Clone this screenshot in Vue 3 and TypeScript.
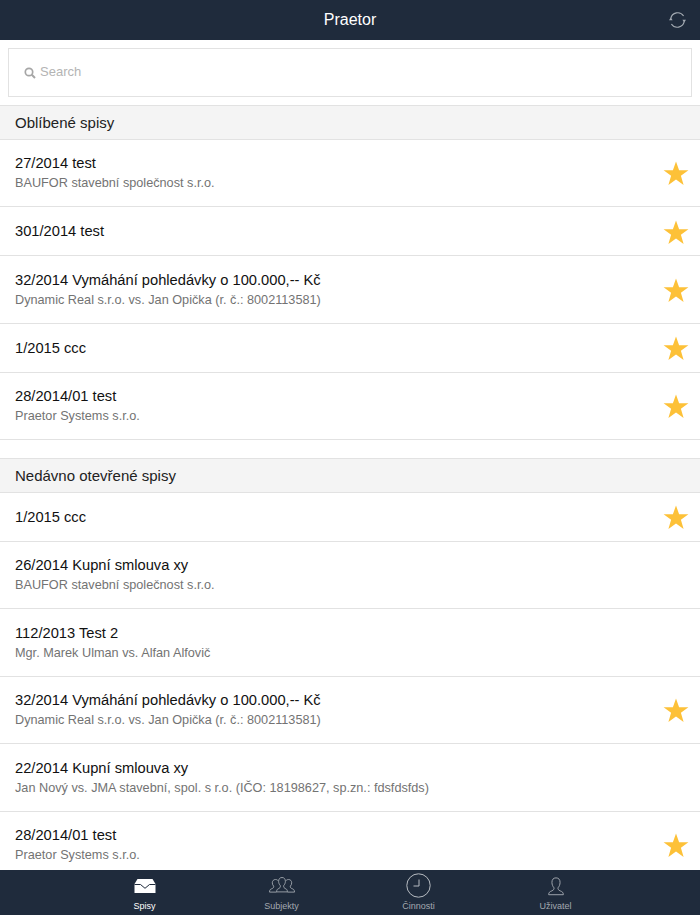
<script setup lang="ts">
interface Row { title: string; sub?: string; star: boolean }
const favourites: Row[] = [
  { title: '27/2014 test', sub: 'BAUFOR stavební společnost s.r.o.', star: true },
  { title: '301/2014 test', star: true },
  { title: '32/2014 Vymáhání pohledávky o 100.000,-- Kč', sub: 'Dynamic Real s.r.o. vs. Jan Opička (r. č.: 8002113581)', star: true },
  { title: '1/2015 ccc', star: true },
  { title: '28/2014/01 test', sub: 'Praetor Systems s.r.o.', star: true },
]
const recent: Row[] = [
  { title: '1/2015 ccc', star: true },
  { title: '26/2014 Kupní smlouva xy', sub: 'BAUFOR stavební společnost s.r.o.', star: false },
  { title: '112/2013 Test 2', sub: 'Mgr. Marek Ulman vs. Alfan Alfovič', star: false },
  { title: '32/2014 Vymáhání pohledávky o 100.000,-- Kč', sub: 'Dynamic Real s.r.o. vs. Jan Opička (r. č.: 8002113581)', star: true },
  { title: '22/2014 Kupní smlouva xy', sub: 'Jan Nový vs. JMA stavební, spol. s r.o. (IČO: 18198627, sp.zn.: fdsfdsfds)', star: false },
  { title: '28/2014/01 test', sub: 'Praetor Systems s.r.o.', star: true },
]
const sections = [
  { name: 'Oblíbené spisy', rows: favourites },
  { name: 'Nedávno otevřené spisy', rows: recent },
]
</script>

<template>
  <div class="app">
    <header class="topbar">
      <span class="topbar-title">Praetor</span>
      <svg class="sync" width="18" height="18" viewBox="0 0 18 18" fill="none" stroke="#a4abb3" stroke-width="1.1">
        <path d="M1.800 7.600A7 7 0 0 1 14.600 5" />
        <path d="M15.200 10.400A7 7 0 0 1 2.400 13" />
        <path d="M0 9.300 1.800 6.600 3.600 9.300z" fill="#a4abb3" stroke="none" />
        <path d="M13.400 8.700 15.200 11.400 17 8.700z" fill="#a4abb3" stroke="none" />
      </svg>
    </header>

    <main class="content">
      <div class="search-wrap">
        <div class="search">
          <svg width="12" height="12" viewBox="0 0 12 12" fill="none" stroke="#a6a6a6" stroke-width="1.7">
            <circle cx="5" cy="5" r="3.700" />
            <path d="M7.800 7.800 11 11" stroke-width="2" />
          </svg>
          <span class="search-text">Search</span>
        </div>
      </div>

      <section v-for="s in sections" :key="s.name" class="section">
        <h2 class="section-head">{{ s.name }}</h2>
        <div v-for="(r, i) in s.rows" :key="i" class="row" :class="{ tall: r.sub }">
          <div class="row-text">
            <div class="row-title">{{ r.title }}</div>
            <div v-if="r.sub" class="row-sub">{{ r.sub }}</div>
          </div>
          <svg v-if="r.star" class="star" width="26" height="25" viewBox="0 0 26 25">
            <path d="M13 0.500 16.100 9.200H25.400L17.900 14.800 20.600 24 13 18.500 5.400 24 8.100 14.800 0.600 9.200H9.900z" fill="#fdc138" />
          </svg>
        </div>
      </section>
    </main>

    <nav class="tabbar">
      <div class="tab active">
        <svg class="tab-icon inbox" width="24" height="16" viewBox="0 0 24 16">
          <path d="M4.500 1H19.500L22.500 6V15H1.500V6z" fill="#fff" />
          <path d="M1.500 6.500H7.500L12 10.300 16.500 6.500H22.500" fill="none" stroke="#1f2b3c" stroke-width="1" />
        </svg>
        <span>Spisy</span>
      </div>
      <div class="tab">
        <svg class="tab-icon people" width="28" height="18" viewBox="0 0 28 18" fill="none" stroke="#a3a9b0" stroke-width="0.9">
          <path d="M14 1.500c-2.200 0-3.400 1.600-3.400 3.800 0 1.800.8 3.300 1.700 4.300.4 1.700-.7 2.700-2.200 3.300-.8.400-1.500 1-1.500 3h10.800c0-2-.7-2.600-1.500-3-1.500-.6-2.600-1.600-2.200-3.300.9-1 1.700-2.500 1.700-4.300 0-2.200-1.200-3.800-3.400-3.800z" />
          <path d="M9.800 4.400C9.200 3.800 8.400 3.500 7.500 3.500 5.500 3.500 4.300 5 4.300 6.800c0 1.400.6 2.600 1.400 3.400.2 1.200-.5 2-1.900 2.500-.9.400-2.300.8-2.300 3.400h7.100" />
          <path d="M18.200 4.400c.6-.6 1.400-.9 2.300-.9 2 0 3.200 1.500 3.200 3.300 0 1.400-.6 2.600-1.400 3.400-.2 1.200.5 2 1.900 2.500.9.400 2.300.8 2.300 3.400h-7.100" />
        </svg>
        <span>Subjekty</span>
      </div>
      <div class="tab">
        <svg class="tab-icon clock" width="25" height="25" viewBox="0 0 25 25" fill="none" stroke="#b6bbc1" stroke-width="1">
          <circle cx="12.500" cy="12.500" r="11.700" />
          <path d="M13 6.500V13H7.500" />
        </svg>
        <span>Činnosti</span>
      </div>
      <div class="tab">
        <svg class="tab-icon user" width="18" height="19" viewBox="0 0 20 22" fill="none" stroke="#a3a9b0" stroke-width="1.1">
          <path d="M10 1C6.800 1 5.300 3.200 5.300 6.200c0 2.800 1.200 5 2.300 6.200.5 1.600-.5 2.800-2.500 3.700C2.800 17 1.500 17.800 1.500 20.500h17c0-2.700-1.300-3.500-3.600-4.400-2-.9-3-2.100-2.500-3.700 1.100-1.200 2.300-3.400 2.300-6.200C14.700 3.200 13.200 1 10 1z" />
        </svg>
        <span>Uživatel</span>
      </div>
    </nav>
  </div>
</template>

<style scoped>
.app {
  width: 700px;
  height: 915px;
  display: flex;
  flex-direction: column;
  overflow: hidden;
  background: #fff;
  font-family: "Liberation Sans", Arial, sans-serif;
  color: #1c1c1c;
}
.topbar {
  height: 40px;
  flex: none;
  background: #1f2b3c;
  display: flex;
  align-items: center;
  justify-content: center;
  position: relative;
}
.topbar-title {
  color: #fff;
  font-size: 16px;
  font-weight: 500;
}
.sync {
  position: absolute;
  right: 13px;
  top: 11px;
}
.content {
  flex: 1;
  min-height: 0;
  overflow: hidden;
}
.search-wrap {
  padding: 8px 8px;
}
.search {
  height: 49px;
  box-sizing: border-box;
  border: 1px solid #e2e2e2;
  display: flex;
  align-items: center;
  padding-left: 15px;
  gap: 4px;
}
.search-text {
  color: #b4b4b4;
  font-size: 13px;
  margin-bottom: 2px;
}
.section {
  margin-bottom: 18px;
}
.section-head {
  margin: 0;
  height: 34.500px;
  box-sizing: border-box;
  background: #f4f4f4;
  border-top: 1px solid #e2e2e2;
  border-bottom: 1px solid #e2e2e2;
  padding-left: 15px;
  font-size: 15px;
  font-weight: 400;
  line-height: 33px;
  color: #222;
}
.row {
  height: 49px;
  box-sizing: border-box;
  border-bottom: 1px solid #e2e2e2;
  display: flex;
  align-items: center;
  padding: 0 11.500px 0 15px;
}
.row.tall {
  height: 67.500px;
}
.row-text {
  flex: 1;
  min-width: 0;
}
.row-title {
  font-size: 14.700px;
  line-height: 18px;
  color: #111;
}
.row-sub {
  font-size: 12.700px;
  line-height: 16px;
  margin-top: 3px;
  color: #737373;
}
.star {
  flex: none;
  margin-top: 2px;
}
.tabbar {
  height: 45px;
  flex: none;
  background: #1f2b3c;
  display: flex;
  justify-content: center;
}
.tab {
  width: 137px;
  display: flex;
  flex-direction: column;
  align-items: center;
  justify-content: flex-end;
  padding-bottom: 3px;
  box-sizing: border-box;
  font-size: 9px;
  color: #a3a9b0;
}
.tab span {
  line-height: 12px;
}
.tab.active {
  color: #fff;
}
.inbox,
.people {
  margin-bottom: 6px;
}
.clock {
  margin-bottom: 2px;
}
.user {
  margin-bottom: 4px;
}
</style>
